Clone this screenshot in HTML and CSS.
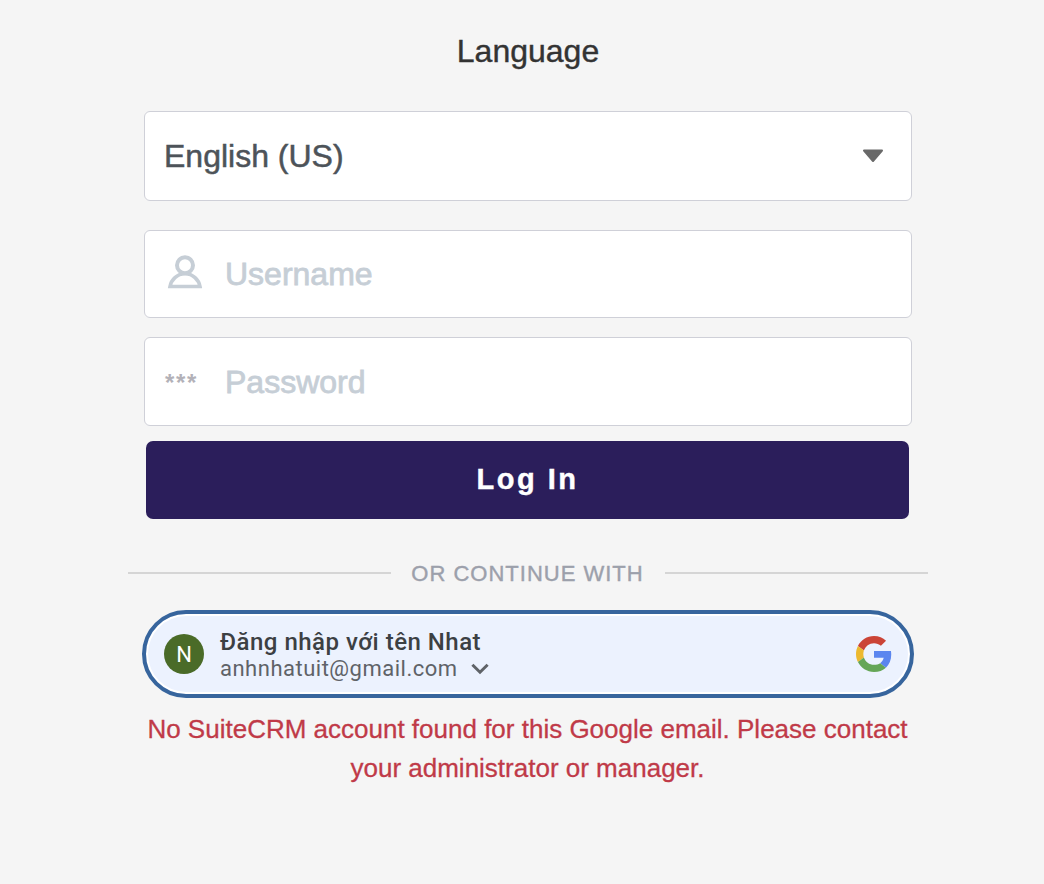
FILE: index.html
```html
<!DOCTYPE html>
<html lang="en">
<head>
    <meta charset="UTF-8">
    <meta name="viewport" content="width=device-width, initial-scale=1.0">
    <title>Login</title>
    <link rel="stylesheet" href="styles.css">
</head>
<body>
    <div class="login">
        <form class="login-form">
            <h1>Language</h1>

            <div class="field language">
                <span>English (US)</span>
                <svg class="arrow" width="22" height="14" viewBox="0 0 22 14">
                    <path d="M2 1.5h18L11 12z" fill="#696969" stroke="#696969" stroke-width="2" stroke-linejoin="round"/>
                </svg>
            </div>

            <div class="field username">
                <svg class="user-icon" width="36" height="34" viewBox="0 0 36 34">
                    <g fill="none" stroke="#c6ced6" stroke-width="4">
                        <circle cx="18" cy="10.3" r="8"/>
                        <path d="M3 31.5C4.2 24.8 10 18.8 18 18.8S31.8 24.8 33 31.5z" stroke-width="3.6"/>
                    </g>
                </svg>
                <input type="text" placeholder="Username">
            </div>

            <div class="field password">
                <span class="stars">***</span>
                <input type="password" placeholder="Password">
            </div>

            <button type="button" class="login-button">Log In</button>
        </form>

        <div class="divider"><span>OR CONTINUE WITH</span></div>

        <div class="google-button" lang="vi">
            <div class="avatar">N</div>
            <div class="account">
                <div class="account-name">Đăng nhập với tên Nhat</div>
                <div class="account-email">
                    anhnhatuit@gmail.com
                    <svg width="18" height="12" viewBox="0 0 18 12">
                        <path d="M1.4 1.7L9 9.2l7.6-7.5" fill="none" stroke="#5f6368" stroke-width="3"/>
                    </svg>
                </div>
            </div>
            <svg class="google-logo" width="36" height="36" viewBox="0 0 48 48">
                <path fill="#cb4437" d="M24 9.5c3.54 0 6.71 1.22 9.21 3.6l6.85-6.85C35.9 2.38 30.47 0 24 0 14.62 0 6.51 5.38 2.56 13.22l7.98 6.19C12.43 13.72 17.74 9.5 24 9.5z"/>
                <path fill="#5b86ef" d="M46.98 24.55c0-1.57-.15-3.09-.38-4.55H24v9.02h12.94c-.58 2.96-2.26 5.48-4.78 7.18l7.73 6c4.51-4.18 7.09-10.36 7.09-17.65z"/>
                <path fill="#ecb92f" d="M10.53 28.59c-.48-1.45-.76-2.99-.76-4.59s.27-3.14.76-4.59l-7.98-6.19C.92 16.46 0 20.12 0 24c0 3.88.92 7.54 2.56 10.78l7.97-6.19z"/>
                <path fill="#65a657" d="M24 48c6.48 0 11.93-2.13 15.89-5.81l-7.73-6c-2.15 1.45-4.92 2.3-8.16 2.3-6.26 0-11.57-4.22-13.47-9.91l-7.98 6.19C6.51 42.62 14.62 48 24 48z"/>
            </svg>
        </div>

        <p class="error">No SuiteCRM account found for this Google email. Please contact your administrator or manager.</p>
    </div>
</body>
</html>
```

FILE: styles.css
```css
* {
    margin: 0;
    padding: 0;
    box-sizing: border-box;
}
body {
    background: #f5f5f5;
    font-family: "Liberation Sans", Arial, sans-serif;
}
.login {
    width: 800px;
    margin-left: 128px;
    padding-top: 31px;
}
.login-form {
    padding: 0 16px;
}
h1 {
    font-size: 32px;
    font-weight: 400;
    line-height: 40px;
    color: #333;
    text-align: center;
    margin-bottom: 40px;
    -webkit-text-stroke: 0.4px #333;
}
.field {
    display: flex;
    align-items: center;
    background: #fff;
    border: 1px solid #cfd0d8;
    border-radius: 6px;
    font-size: 32px;
}
.language {
    height: 90px;
    justify-content: space-between;
    padding: 0 27px 0 19px;
    margin-bottom: 29px;
    color: #4d5359;
    -webkit-text-stroke: 0.5px #4d5359;
}
.username {
    height: 88px;
    padding-left: 22px;
    margin-bottom: 19px;
}
.user-icon {
    margin-right: 22px;
    margin-bottom: 4px;
}
.password {
    height: 89px;
    padding: 2px 0 0 20px;
    margin-bottom: 15px;
}
.stars {
    width: 60px;
    font-size: 24px;
    font-weight: 700;
    letter-spacing: 1.7px;
    color: #b3b1b8;
}
input {
    flex: 1;
    min-width: 0;
    border: none;
    outline: none;
    background: none;
    font: inherit;
}
input::placeholder {
    color: #c6ced6;
    -webkit-text-stroke: 0.8px #c6ced6;
}
.login-button {
    display: block;
    width: 763px;
    height: 78px;
    margin-left: 2px;
    padding-bottom: 1px;
    border: none;
    border-radius: 7px;
    background: #2b1e5b;
    color: #fff;
    font-family: inherit;
    font-size: 29px;
    font-weight: 700;
    letter-spacing: 2.5px;
    -webkit-text-stroke: 0.4px #fff;
    cursor: pointer;
}
.divider {
    display: flex;
    align-items: center;
    gap: 20px;
    margin-top: 39px;
    font-size: 22px;
    line-height: 28px;
    letter-spacing: 1px;
    color: #9ca0ab;
    white-space: nowrap;
    -webkit-text-stroke: 0.4px #9ca0ab;
}
.divider span {
    padding: 2px 1px 0 0;
}
.divider::before,
.divider::after {
    content: "";
    flex: 1;
    height: 2px;
    background: #d5d5d5;
}
.google-button {
    display: flex;
    align-items: center;
    height: 88px;
    margin: 22px 14px 0;
    padding: 0 18px;
    border: 4px solid #37659d;
    border-radius: 44px;
    background: #ecf2fe;
    box-shadow: inset 0 0 0 2px #fff;
    font-family: Roboto, sans-serif;
}
.avatar {
    width: 40px;
    height: 40px;
    margin-right: 16px;
    border-radius: 50%;
    background: #4a6b28;
    color: #fff;
    font-size: 22px;
    line-height: 41px;
    text-align: center;
}
.account {
    flex: 1;
    padding-top: 3px;
}
.account-name {
    font-size: 24px;
    font-weight: 500;
    line-height: 26px;
    letter-spacing: 0.5px;
    color: #3c4043;
}
.account-email {
    font-size: 22px;
    line-height: 27px;
    letter-spacing: 0.5px;
    color: #5f6368;
}
.account-email svg {
    margin-left: 7px;
    vertical-align: 1px;
}
.error {
    margin-top: 12px;
    padding: 0 17px 0 16px;
    font-size: 26px;
    line-height: 39px;
    text-align: center;
    color: #c03a48;
    -webkit-text-stroke: 0.3px #c03a48;
}
```
